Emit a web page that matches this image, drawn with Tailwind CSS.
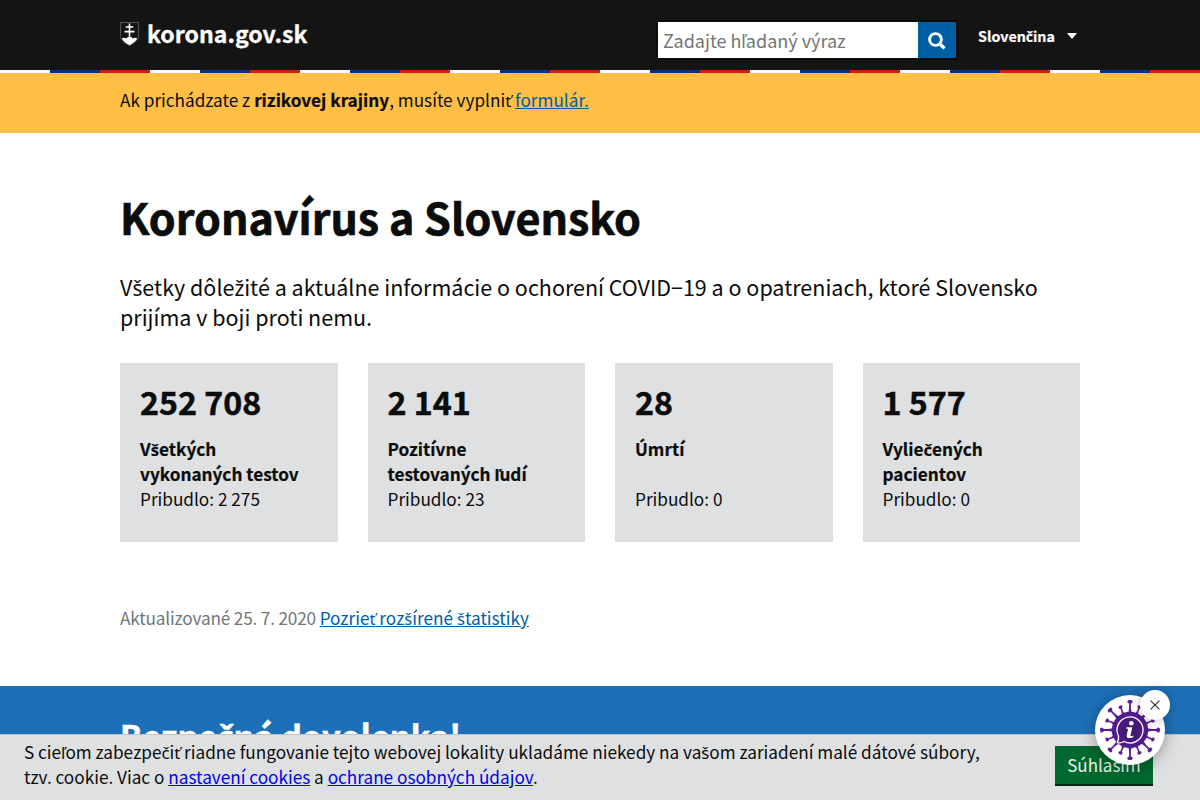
<!DOCTYPE html>
<html lang="sk">
<head>
<meta charset="utf-8">
<title>Koronavírus a Slovensko</title>
<script src="https://cdn.jsdelivr.net/npm/@tailwindcss/browser@4"></script>
</head>
<body class="h-[800px] overflow-hidden bg-white font-['Noto_Sans_CJK_JP','Noto_Sans',sans-serif] text-[17.2px] leading-[25px] text-[#0b0c0c]">
<header class="h-[70px] bg-[#141414]">
  <div class="mx-auto flex h-full w-[960px] items-start text-white">
    <a class="flex pt-[19px]">
      <svg class="mt-[3px] mr-[8px] h-[24px] w-[19px]" viewBox="0 0 19 24">
        <path d="M.5.5h18V14c0 5-5 7.500-9 9.500C5.500 21.500.5 19 .5 14z" fill="#141414" stroke="#555" />
        <path d="M8.700 1.500h1.600v2.700h3v1.600h-3v3h4.200v1.600h-4.200V15c1.400 0 2 .7 2.500 1.400 1.500-.9 3.200-.8 4.400.1-1.200 3-4.400 5-7.700 6.700-3.300-1.700-6.500-3.700-7.700-6.700 1.200-.9 2.900-1 4.400-.1.500-.7 1.100-1.400 2.500-1.400v-4.600H4.500V8.800h4.200v-3h-3V4.200h3z" fill="#fff" />
      </svg>
      <span class="text-[23.1px] leading-[29px] font-bold whitespace-nowrap [-webkit-text-stroke:0.3px]">korona.gov.sk</span>
    </a>
    <form class="mt-[20px] ml-auto flex border-2 border-[#0b0c0c]">
      <div class="h-[36px] w-[260px] bg-white pl-[5px] text-[18px] leading-[37px] text-[#757575]">Zadajte hľadaný výraz</div>
      <div class="flex h-[36px] w-[38px] items-center justify-center bg-[#005ea5]">
        <svg class="mt-[2px] mr-[1px] h-[18px] w-[18px]" viewBox="0 0 18 18" fill="none" stroke="#fff"><circle cx="7.500" cy="7.500" r="5.900" stroke-width="2.800"/><path d="M11.500 11.500l5 5" stroke-width="3.200"/></svg>
      </div>
    </form>
    <div class="ml-[20px] flex w-[102px] items-center pt-[23px] text-[14.300px] font-bold [-webkit-text-stroke:0.2px]">
      <span>Slovenčina</span>
      <svg class="ml-auto mr-[3px] h-[6px] w-[10px]" viewBox="0 0 10 6"><path d="M0 0h10L5 6z" fill="#fff"/></svg>
    </div>
  </div>
</header>
<div class="h-[3px] bg-[repeating-linear-gradient(90deg,#fff_0_50px,#003087_50px_100px,#d91a12_100px_150px)]"></div>
<div class="h-[60px] bg-[#ffbf47] pt-[14px]">
  <p class="mx-auto w-[960px]">Ak prichádzate z <b class="[-webkit-text-stroke:0.2px]">rizikovej krajiny</b>, musíte vyplniť <a class="text-[#005ea5] underline">formulár.</a></p>
</div>
<main class="mx-auto h-[553px] w-[960px] pt-[58px]">
  <h1 class="text-[43px] leading-[50px] font-bold [-webkit-text-stroke:0.7px]">Koronavírus a Slovensko</h1>
  <p class="mt-[31px] text-[21.500px] leading-[30px]">Všetky dôležité a aktuálne informácie o ochorení COVID−19 a o opatreniach, ktoré Slovensko prijíma v boji proti nemu.</p>
  <div class="mt-[31px] grid grid-cols-4 gap-[30px]">
    <section class="h-[179px] bg-[#dee0e2] px-[20px] pt-[18px]"><h2 class="mb-[15px] text-[32.200px] leading-[40px] font-bold [-webkit-text-stroke:0.5px]">252 708</h2><b class="[-webkit-text-stroke:0.2px]">Všetkých<br>vykonaných testov</b><p>Pribudlo: 2 275</p></section>
    <section class="h-[179px] bg-[#dee0e2] px-[20px] pt-[18px]"><h2 class="mb-[15px] text-[32.200px] leading-[40px] font-bold [-webkit-text-stroke:0.5px]">2 141</h2><b class="[-webkit-text-stroke:0.2px]">Pozitívne<br>testovaných ľudí</b><p>Pribudlo: 23</p></section>
    <section class="h-[179px] bg-[#dee0e2] px-[20px] pt-[18px]"><h2 class="mb-[15px] text-[32.200px] leading-[40px] font-bold [-webkit-text-stroke:0.5px]">28</h2><b class="[-webkit-text-stroke:0.2px]">Úmrtí<br>&nbsp;</b><p>Pribudlo: 0</p></section>
    <section class="h-[179px] bg-[#dee0e2] px-[20px] pt-[18px]"><h2 class="mb-[15px] text-[32.200px] leading-[40px] font-bold [-webkit-text-stroke:0.5px]">1 577</h2><b class="[-webkit-text-stroke:0.2px]">Vyliečených<br>pacientov</b><p>Pribudlo: 0</p></section>
  </div>
  <p class="mt-[63px] text-[#6f777b]"><span class="tracking-[-0.17px]">Aktualizované 25. 7. 2020 </span><a class="text-[#005ea5] underline">Pozrieť rozšírené štatistiky</a></p>
</main>
<div class="h-[114px] bg-[#1d70b8] pt-[24px]">
  <h2 class="mx-auto w-[960px] text-[32.500px] leading-[50px] font-bold text-white [-webkit-text-stroke:0.5px]">Bezpečná dovolenka!</h2>
</div>
<div class="fixed inset-x-0 bottom-0 flex h-[66px] border-t border-[#bfc1c3] bg-[#dee0e2] pt-[4px] pl-[24px]">
  <p class="w-[1031px]">S cieľom zabezpečiť riadne fungovanie tejto webovej lokality ukladáme niekedy na vašom zariadení malé dátové súbory,<br>tzv. cookie. Viac o <a class="text-[#0000ee] underline">nastavení cookies</a> a <a class="text-[#0000ee] underline">ochrane osobných údajov</a>.</p>
  <button class="mt-[7px] h-[40px] w-[98px] border-b-2 border-[#002a15] bg-[#00692f] pb-px text-[17px] text-white/90">Súhlasím</button>
</div>
<div class="fixed top-[695px] left-[1095px] h-[70px] w-[70px] rounded-full bg-white shadow-[0_2px_16px_rgba(0,0,0,0.35)]">
  <svg class="h-[70px] w-[70px]" viewBox="-35 -35 70 70" fill="none" stroke-linecap="round">
    <defs>
      <radialGradient id="virus" gradientUnits="userSpaceOnUse" cx="0" cy="0" r="29"><stop offset="0" stop-color="#3a1a63"/><stop offset=".45" stop-color="#4c1a86"/><stop offset="1" stop-color="#5f1f9f"/></radialGradient>
      <g id="long"><path d="M-3.200-16Q-.9-18-.9-22v-5h1.800v5Q.9-18 3.200-16z" fill="#5a1e98"/><path d="M-.9-28.200H.9" stroke="#5a1e98" stroke-width="3.400"/></g>
      <g id="short"><path d="M-3-16Q-.8-18-.8-20v-4H.8v4Q.8-18 3-16z" fill="#5a1e98"/><path d="M-.6-24.800H.6" stroke="#5a1e98" stroke-width="3"/></g>
    </defs>
    <use href="#long"/><use href="#long" transform="rotate(45)"/><use href="#long" transform="rotate(90)"/><use href="#long" transform="rotate(135)"/><use href="#long" transform="rotate(180)"/><use href="#long" transform="rotate(225)"/><use href="#long" transform="rotate(270)"/><use href="#long" transform="rotate(315)"/>
    <use href="#short" transform="rotate(22.5)"/><use href="#short" transform="rotate(67.5)"/><use href="#short" transform="rotate(112.5)"/><use href="#short" transform="rotate(157.5)"/><use href="#short" transform="rotate(202.5)"/><use href="#short" transform="rotate(247.5)"/><use href="#short" transform="rotate(292.5)"/><use href="#short" transform="rotate(337.5)"/>
    <circle r="18.200" fill="url(#virus)"/>
    <path d="M-11.500 6A13 13 0 1 1-6 11.500Q-9 13.400-12.800 12.700-11 10-11.500 6z" stroke="#fff" stroke-width="1.300" stroke-linejoin="round"/>
    <circle cx="1.300" cy="-6.700" r="2.300" fill="#fff"/>
    <path d="M-3.600-2.800H2.300L.5 5.600Q.4 6.700 3.500 5.600L3.200 7.200Q-3.800 9.600-3.300 5.200L-1.900-1.300H-3.900z" fill="#fff"/>
  </svg>
</div>
<button class="fixed top-[690px] left-[1140px] flex h-[30px] w-[30px] items-center justify-center rounded-full bg-white shadow-[0_0_12px_rgba(0,0,0,0.25)]">
  <svg class="h-[10px] w-[10px]" viewBox="0 0 10 10" stroke="#333" stroke-width="1.200"><path d="M.6.6l8.800 8.800M9.400.6L.6 9.400"/></svg>
</button>
<script>
const walker = document.createTreeWalker(document.body, NodeFilter.SHOW_TEXT);
const nodes = [];
while (walker.nextNode()) if (walker.currentNode.parentNode.tagName !== 'SCRIPT' && /[čďľňšťž]/.test(walker.currentNode.data)) nodes.push(walker.currentNode);
for (const node of nodes) {
  const holder = document.createElement('span');
  holder.innerHTML = node.data.replace(/[čďľňšťž]/g, `<span class="font-['Noto_Sans',sans-serif] text-[0.97em] leading-none">$&</span>`);
  node.replaceWith(...holder.childNodes);
}
</script>
</body>
</html>
